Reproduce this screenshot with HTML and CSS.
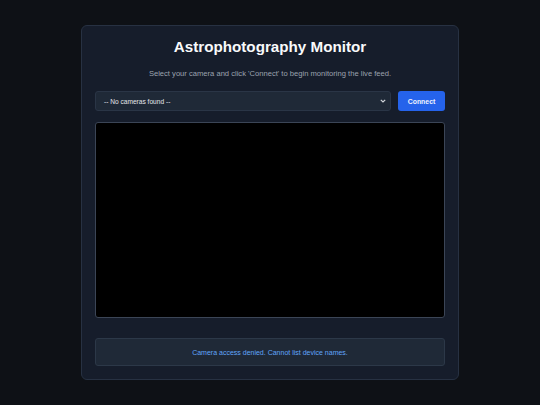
FILE: index.html
```html
<!DOCTYPE html>
<html lang="en">
<head>
<meta charset="utf-8">
<title>Astrophotography Monitor</title>
<link rel="stylesheet" href="styles.css">
</head>
<body>
<main class="card">
  <h1 class="title">Astrophotography Monitor</h1>
  <p class="subtitle">Select your camera and click 'Connect' to begin monitoring the live feed.</p>
  <div class="controls">
    <div class="select">
      <span class="select-text">-- No cameras found --</span>
      <svg class="chevron" width="6" height="4" viewBox="0 0 6 4"><path d="M0.8 0.8 L3 3 L5.2 0.8" fill="none" stroke="#d1d5db" stroke-width="1.2"/></svg>
    </div>
    <button class="btn">Connect</button>
  </div>
  <div class="video"></div>
  <div class="status">Camera access denied. Cannot list device names.</div>
</main>
</body>
</html>
```

FILE: styles.css
```css
html, body {
  margin: 0;
  padding: 0;
}
body {
  background: #0e1116;
  font-family: "Liberation Sans", Arial, sans-serif;
  padding-top: 25px;
  height: 405px;
  box-sizing: border-box;
}
.card {
  width: 378px;
  box-sizing: border-box;
  margin: 0 auto;
  background: #161d2b;
  border: 1px solid #273142;
  border-radius: 6px;
  padding: 13px 13px 13px;
  display: flex;
  flex-direction: column;
}
.title {
  margin: 0;
  font-size: 15.2px;
  font-weight: bold;
  color: #f9fafb;
  text-align: center;
  line-height: 16px;
}
.subtitle {
  margin: 14px 0 0;
  font-size: 7.6px;
  line-height: 10px;
  color: #9ca3af;
  text-align: center;
}
.controls {
  display: flex;
  gap: 7px;
  margin-top: 12px;
  height: 20px;
}
.select {
  flex: 1;
  display: flex;
  align-items: center;
  justify-content: space-between;
  background: #1f2937;
  border: 1px solid #2a3546;
  border-radius: 3px;
  padding: 0 4px 0 8px;
  color: #e5e7eb;
  font-size: 6.6px;
}
.btn {
  width: 47px;
  border: none;
  border-radius: 3px;
  background: #2563eb;
  color: #eef2ff;
  font-family: "Liberation Sans", Arial, sans-serif;
  font-size: 6.9px;
  font-weight: bold;
  padding: 0;
}
.video {
  margin-top: 11px;
  height: 196px;
  flex-shrink: 0;
  background: #000;
  border: 1px solid #3b4556;
  border-radius: 3px;
  box-sizing: border-box;
}
.status {
  margin-top: 20px;
  height: 28px;
  box-sizing: border-box;
  background: #1f2937;
  border: 1px solid #2c3848;
  border-radius: 3px;
  color: #60a5fa;
  font-size: 7px;
  display: flex;
  align-items: center;
  justify-content: center;
}
```
